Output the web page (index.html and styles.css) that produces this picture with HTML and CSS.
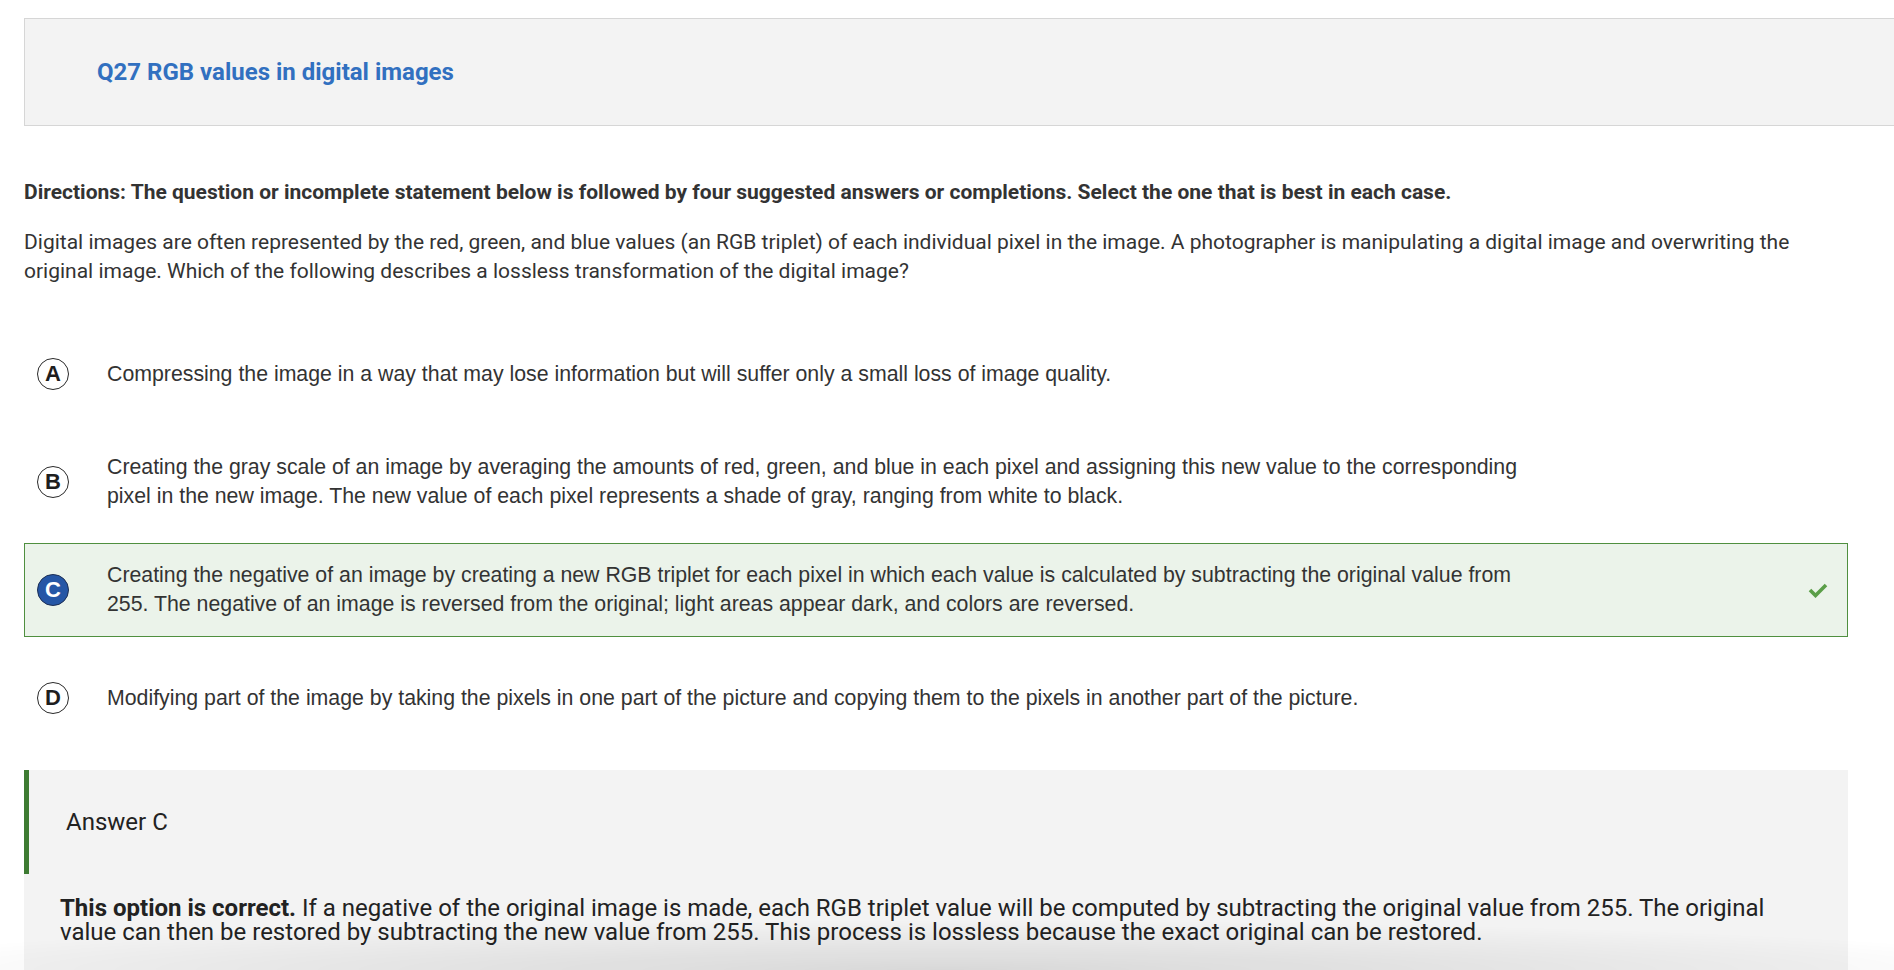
FILE: index.html
```html
<!DOCTYPE html>
<html lang="en">
<head>
<meta charset="utf-8">
<title>Q27 RGB values in digital images</title>
<link rel="stylesheet" href="styles.css">
</head>
<body>
<div class="page">
  <header class="qhead">
    <h1 class="qtitle">Q27 RGB values in digital images</h1>
  </header>

  <p class="directions">Directions: The question or incomplete statement below is followed by four suggested answers or completions. Select the one that is best in each case.</p>

  <p class="stem">Digital images are often represented by the red, green, and blue values (an RGB triplet) of each individual pixel in the image. A photographer is manipulating a digital image and overwriting the original image. Which of the following describes a lossless transformation of the digital image?</p>

  <ul class="options">
    <li class="option">
      <span class="badge">A</span>
      <span class="otext">Compressing the image in a way that may lose information but will suffer only a small loss of image quality.</span>
    </li>
    <li class="option">
      <span class="badge">B</span>
      <span class="otext">Creating the gray scale of an image by averaging the amounts of red, green, and blue in each pixel and assigning this new value to the corresponding pixel in the new image. The new value of each pixel represents a shade of gray, ranging from white to black.</span>
    </li>
    <li class="option correct">
      <span class="badge badge-selected">C</span>
      <span class="otext">Creating the negative of an image by creating a new RGB triplet for each pixel in which each value is calculated by subtracting the original value from 255. The negative of an image is reversed from the original; light areas appear dark, and colors are reversed.</span>
      <svg class="check" width="20" height="16" viewBox="0 0 20 16" aria-hidden="true">
        <polyline points="2,8 7.5,13.5 18,3" fill="none" stroke="#5a9e48" stroke-width="3.6" stroke-linejoin="miter" stroke-linecap="butt"/>
      </svg>
    </li>
    <li class="option">
      <span class="badge">D</span>
      <span class="otext">Modifying part of the image by taking the pixels in one part of the picture and copying them to the pixels in another part of the picture.</span>
    </li>
  </ul>

  <section class="answer">
    <div class="answer-head">Answer C</div>
    <p class="explain"><strong>This option is correct.</strong> If a negative of the original image is made, each RGB triplet value will be computed by subtracting the original value from 255. The original value can then be restored by subtracting the new value from 255. This process is lossless because the exact original can be restored.</p>
  </section>
</div>
<div class="bottom-shade"></div>
</body>
</html>
```

FILE: styles.css
```css
html, body {
  margin: 0;
  padding: 0;
  background: #ffffff;
}

body {
  font-family: Roboto, "Noto Sans", "Liberation Sans", sans-serif;
  color: #333333;
  overflow: hidden;
}

.page {
  padding: 18px 46px 0 24px;
}

.qhead {
  box-sizing: border-box;
  height: 108px;
  margin-right: -46px;
  background: #f3f3f3;
  border: 1px solid #d6d6d6;
  border-right: none;
  display: flex;
  align-items: center;
  padding-left: 72px;
}

.qtitle {
  margin: 0;
  font-size: 24px;
  font-weight: 700;
  color: #3170c0;
  line-height: 29px;
}

.directions {
  margin: 52px 0 0;
  font-size: 21px;
  font-weight: 700;
  line-height: 29px;
  color: #333333;
}

.stem {
  margin: 21px 0 0;
  font-size: 21px;
  line-height: 29px;
  color: #333333;
}

.options {
  list-style: none;
  margin: 41px 0 0;
  padding: 0;
  display: flex;
  flex-direction: column;
  gap: 14px;
}

.option {
  box-sizing: border-box;
  min-height: 94px;
  border: 1px solid transparent;
  display: flex;
  align-items: center;
  padding: 0 0 0 12px;
  font-family: "Liberation Sans", Arial, sans-serif;
  font-size: 21.3px;
  line-height: 29px;
  color: #333333;
}

.badge {
  box-sizing: border-box;
  flex: none;
  width: 32px;
  height: 32px;
  border: 1.5px solid #2a2a2a;
  border-radius: 50%;
  display: flex;
  align-items: center;
  justify-content: center;
  font-family: "Liberation Sans", Arial, sans-serif;
  font-weight: 700;
  font-size: 22px;
  line-height: 1;
  color: #1e1e1e;
  margin-right: 38px;
  background: #ffffff;
}

.badge-selected {
  background: #2556a6;
  color: #ffffff;
  border-color: #1d2f55;
}

.otext {
  max-width: 1430px;
}

.correct {
  background: #ebf3ea;
  border-color: #4f8f3f;
}

.check {
  flex: none;
  margin-left: auto;
  margin-right: 19px;
}

.answer {
  margin-top: 25px;
  background: #f3f3f3;
  padding-bottom: 120px;
}

.answer-head {
  box-sizing: border-box;
  height: 104px;
  border-left: 5px solid #3d7b32;
  display: flex;
  align-items: center;
  padding-left: 37px;
  font-size: 24px;
  color: #222222;
}

.explain {
  margin: 22px 0 0;
  padding: 0 36px;
  font-size: 24px;
  line-height: 24px;
  color: #222222;
}

.explain strong {
  font-weight: 700;
}

.bottom-shade {
  position: fixed;
  left: 0;
  right: 0;
  bottom: 0;
  height: 50px;
  pointer-events: none;
  background: radial-gradient(ellipse 60% 100% at 50% 100%, rgba(0, 0, 0, 0.11), rgba(0, 0, 0, 0) 100%);
}
```
